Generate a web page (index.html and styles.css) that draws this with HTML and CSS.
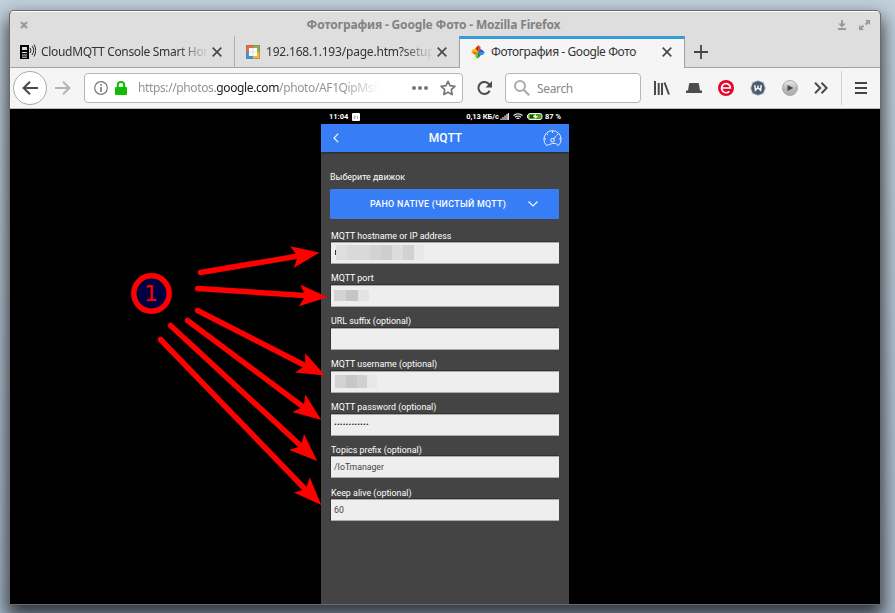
FILE: index.html
```html
<!DOCTYPE html>
<html lang="ru">
<head>
<meta charset="utf-8">
<title>Фотография - Google Фото - Mozilla Firefox</title>
<link rel="stylesheet" href="styles.css">
</head>
<body>
<div class="window">
  <header class="titlebar">
    <svg class="win-close" width="8" height="8" viewBox="0 0 8 8"><path d="M1 1l6 6M7 1L1 7" stroke="#999" stroke-width="2.3"/></svg>
    <h1 class="title">Фотография - Google Фото - Mozilla Firefox</h1>
    <div class="win-actions">
      <svg width="10" height="10" viewBox="0 0 10 10"><path d="M5 0v6M1 9h8" stroke="#999" stroke-width="2"/><path d="M1.3 3.5h7.4L5 7.5z" fill="#999"/></svg>
      <svg width="11" height="10" viewBox="0 0 11 10"><path d="M6 0h5v5L9.300 3.300 7.300 5.200 5.800 3.700 7.800 1.700zM5 10H0V5l1.700 1.700 2-1.900 1.500 1.500-2 2z" fill="#999"/></svg>
    </div>
  </header>
  <nav class="tabs">
    <div class="tab">
      <svg class="favicon" width="16" height="16" viewBox="0 0 16 16"><path d="M0 1h9v14H0z" fill="#000"/><path d="M2 3h5v3H2z" fill="#ddd"/><path d="M2 8.500h5M2 11h5M2 13.200h5" stroke="#ddd"/><path d="M10 4q2 2 0 5M12 2q3.500 4 0 9M14 .5q3.500 6 0 12" stroke="#222" fill="none"/></svg>
      <span class="tab-text t1">CloudMQTT Console Smart Hon</span>
      <svg class="x" width="10" height="10" viewBox="0 0 10 10"><path d="M.7.700l8.600 8.600M9.300.700L.7 9.300"/></svg>
    </div>
    <div class="tab">
      <svg class="favicon" width="14" height="14" viewBox="0 0 14 14"><path d="M0 0h7v7H0z" fill="#ed6b36"/><path d="M7 0h7v7H7z" fill="#8ab34b"/><path d="M0 7h7v7H0z" fill="#3898d9"/><path d="M7 7h7v7H7z" fill="#f6b82e"/><path d="M3 3h8v8H3z" fill="#fff"/><path d="M7 3v8M3 7h8" stroke="#ddd"/><path d="M.5.500h13v13H.5z" fill="none" stroke="#777" stroke-opacity=".5"/></svg>
      <span class="tab-text t2">192.168.1.193/page.htm?setup</span>
      <svg class="x" width="10" height="10" viewBox="0 0 10 10"><path d="M.7.700l8.600 8.600M9.300.700L.7 9.300"/></svg>
    </div>
    <div class="tab active">
      <svg class="favicon" width="14" height="14" viewBox="0 0 14 14"><path d="M7 7V0l2.500 2V5z" fill="#e94335"/><path d="M7 7L4 4l3-3.500z" fill="#b92d21"/><path d="M7 7h7l-2 3H9z" fill="#4285f4"/><path d="M7 7l3-3 3.500 3z" fill="#2d5fc4"/><path d="M7 7v7l-2.500-2V9z" fill="#6ac043"/><path d="M7 7l3 3-3 3.500z" fill="#248c3e"/><path d="M7 7H0l2-3h3z" fill="#fcbc05"/><path d="M7 7l-3 3L.5 7z" fill="#ed7200"/></svg>
      <span class="tab-text t3">Фотография - Google Фото</span>
      <svg class="x" width="10" height="10" viewBox="0 0 10 10"><path d="M.7.700l8.600 8.600M9.300.700L.7 9.300"/></svg>
    </div>
    <svg class="new-tab" width="14" height="14" viewBox="0 0 14 14"><path d="M7 0v14M0 7h14" stroke="#444" stroke-width="1.800"/></svg>
  </nav>
  <div class="toolbar">
    <div class="back"><svg width="16" height="14" viewBox="0 0 16 14"><path d="M16 7H1.500M8 .8L1.600 7 8 13.200" fill="none" stroke="#4a4a4a" stroke-width="2"/></svg></div>
    <svg class="forward" width="16" height="14" viewBox="0 0 16 14"><path d="M0 7h14.500M8 .8L14.400 7 8 13.200" fill="none" stroke="#b4b4b4" stroke-width="2"/></svg>
    <div class="urlbar">
      <svg width="14" height="14" viewBox="0 0 14 14"><circle cx="7" cy="7" r="6.300" fill="none" stroke="#777" stroke-width="1.200"/><path d="M7 3v1.700M7 6v5" stroke="#777" stroke-width="1.600"/></svg>
      <svg class="lock" width="12" height="14" viewBox="0 0 12 14"><path d="M2.800 7V4q0-3 3.200-3t3.200 3v3" fill="none" stroke="#12bc00" stroke-width="2"/><rect y="6" width="12" height="8" rx="1" fill="#12bc00"/></svg>
      <span class="url">https://photos.<b>google.com</b>/photo/AF1QipMs8</span>
      <svg class="dots" width="16" height="4" viewBox="0 0 16 4"><g fill="#777"><circle cx="2" cy="2" r="2"/><circle cx="8" cy="2" r="2"/><circle cx="14" cy="2" r="2"/></g></svg>
      <svg class="star" width="16" height="16" viewBox="0 0 16 16"><path d="M8 1.300l2 4.400 4.900.6-3.600 3.300.9 5L8 12.200l-4.200 2.400.9-5L1.100 6.300 6 5.700z" fill="none" stroke="#777" stroke-width="1.700" stroke-linejoin="round"/></svg>
    </div>
    <svg class="reload" width="15" height="14" viewBox="0 0 15 14"><path d="M12.400 3.600A6 6 0 1 0 12.700 9.800" fill="none" stroke="#4a4a4a" stroke-width="2"/><path d="M15 0v6.500H8.500z" fill="#4a4a4a"/></svg>
    <div class="search">
      <svg width="16" height="16" viewBox="0 0 16 16"><circle cx="6" cy="6" r="5" fill="none" stroke="#aaa" stroke-width="2"/><path d="M9.700 9.700l5.500 5.500" stroke="#aaa" stroke-width="2.200"/></svg>
      <span>Search</span>
    </div>
    <div class="tools">
      <svg width="16" height="14" viewBox="0 0 16 14"><path d="M1 0v14M4.700 2v12M8 2v12M10.500 1.500L15 13.500" stroke="#4a4a4a" stroke-width="2" fill="none"/></svg>
      <svg width="16" height="12" viewBox="0 0 16 12"><path d="M2 8.500L3 2q0-1 1.500-1h7Q13 1 13 2l1 6.500h2V11H0V8.500z" fill="#4c4c4c"/></svg>
      <svg width="16" height="16" viewBox="0 0 16 16"><circle cx="8" cy="8" r="8" fill="#e2062c"/><path d="M3.600 8h8.800A4.400 4.600 0 1 0 11.300 11.200" fill="none" stroke="#fff" stroke-width="1.700"/></svg>
      <svg width="16" height="16" viewBox="0 0 16 16"><path d="M8 0l2.500 1.500 3.400.6.600 3.400L16 8l-1.500 2.500-.6 3.400-3.400.6L8 16l-2.500-1.500-3.400-.6-.6-3.400L0 8l1.500-2.500.6-3.400 3.400-.6z" fill="#a9bac7"/><circle cx="8" cy="8" r="6.700" fill="#4a5c6e"/><path d="M4.800 5.200l.6 5L8 7.800l2.600 2.400.6-5M8 5.500v2.500" fill="none" stroke="#fff" stroke-width="1.400"/></svg>
      <svg width="16" height="16" viewBox="0 0 16 16"><defs><linearGradient id="ball" x2="0" y2="1"><stop stop-color="#eee"/><stop offset=".5" stop-color="#bbb"/><stop offset="1" stop-color="#aaa"/></linearGradient></defs><circle cx="8" cy="8" r="7.500" fill="url(#ball)" stroke="#aaa"/><path d="M5.500 5v6L11.200 8z" fill="#444"/></svg>
      <svg width="14" height="12" viewBox="0 0 14 12"><path d="M1 .7L6.200 6 1 11.300M7.500.700L12.700 6l-5.200 5.300" stroke="#4a4a4a" stroke-width="2" fill="none"/></svg>
    </div>
    <div class="menu"><svg width="12" height="12" viewBox="0 0 12 12"><path d="M0 1h12M0 6h12M0 11h12" stroke="#444" stroke-width="2"/></svg></div>
  </div>
  <main class="content">
    <section class="phone">
      <div class="status">
        <span class="clock">11:04</span>
        <svg width="8" height="8" viewBox="0 0 8 8"><rect width="8" height="8" rx="1" fill="#fff"/><path d="M2 3h1.500v1H2v1.500h1.500M5.500 3v3" stroke="#999" stroke-width=".7" fill="none"/></svg>
        <span class="net">0,13 КБ/с</span>
        <svg class="signal" width="9" height="7" viewBox="0 0 9 7"><path d="M1 7V5.500M3 7V4M5 7V2.500M7 7V1M8.500 7V0" stroke="#ddd" stroke-width="1.300"/></svg>
        <svg class="wifi" width="10" height="7" viewBox="0 0 10 7"><path d="M.5 2.500q4.500-3.500 9 0M2 4.200q3-2.300 6 0M3.600 5.600q1.400-1 2.800 0" stroke="#fff" stroke-width="1.100" fill="none"/></svg>
        <svg class="battery" width="16" height="7" viewBox="0 0 16 7"><rect x="1" y=".5" width="14" height="6" rx="2" fill="#48a71e" stroke="#eee"/><path d="M.5 2v3" stroke="#eee"/><path d="M3 2h3v3H3z" fill="#164c07"/><path d="M9 .7L6 4h2l-.5 2.500L11 3H9z" fill="#fff"/></svg>
        <span class="percent">87 %</span>
      </div>
      <div class="appbar">
        <svg width="6" height="10" viewBox="0 0 6 10"><path d="M5.300.700L1 5l4.300 4.300" fill="none" stroke="#fff" stroke-width="1.100"/></svg>
        <h2>MQTT</h2>
        <svg width="19" height="17" viewBox="0 0 19 17"><path d="M3.600 15.500A8.600 8.600 0 1 1 15.400 15.500Q13 12.500 9.500 13.500T3.600 15.500zM9.500 1v2M1 9h2M16 9h2M3.500 3.500L5 5M15.500 3.500L14 5M10.500 9l3-3.500" fill="none" stroke="#e6eeff" stroke-width="1"/><circle cx="9.500" cy="10.200" r="1.800" fill="none" stroke="#fff"/></svg>
      </div>
      <form class="form">
        <p class="choose">Выберите движок</p>
        <div class="select"><span>PAHO NATIVE (ЧИСТЫЙ MQTT)</span><svg width="10" height="6" viewBox="0 0 10 6"><path d="M.5.500L5 5 9.500.500" fill="none" stroke="#fff" stroke-width="1.100"/></svg></div>
        <div class="field"><label>MQTT hostname or IP address</label><div class="input"><i class="tick"></i><i class="mosaic m-host"></i></div></div>
        <div class="field"><label>MQTT port</label><div class="input"><i class="mosaic m-port"></i></div></div>
        <div class="field"><label>URL suffix (optional)</label><div class="input"></div></div>
        <div class="field"><label>MQTT username (optional)</label><div class="input"><i class="mosaic m-user"></i></div></div>
        <div class="field"><label>MQTT password (optional)</label><div class="input"><span class="password">••••••••••••</span></div></div>
        <div class="field"><label>Topics prefix (optional)</label><div class="input"><span>/IoTmanager</span></div></div>
        <div class="field"><label>Keep alive (optional)</label><div class="input"><span>60</span></div></div>
      </form>
    </section>
  </main>
</div>
<svg class="annotations" width="895" height="613" viewBox="0 0 895 613">
  <defs><marker id="head" markerUnits="userSpaceOnUse" markerWidth="30" markerHeight="24" refX="28" refY="12" orient="auto"><path d="M28 12L0 1l6 11L0 23z" fill="#f00"/></marker></defs>
  <circle cx="151.500" cy="293.500" r="17.700" fill="#000040" stroke="#f00" stroke-width="5.400"/>
  <text x="151" y="301" text-anchor="middle">1</text>
  <g class="shafts"><path d="M200.500 272.500L297 256.200"/><path d="M197.500 288.500L305 295.500"/><path d="M197.500 310.500L304 365"/><path d="M187.500 320.500L302 406"/><path d="M170.500 325.500L300 445"/><path d="M160.500 339.500L304 488"/></g>
  <g class="heads"><path d="M200.500 272.500L319.500 252.500"/><path d="M197.500 288.500L327.500 297.300"/><path d="M197.500 310.500L325 375.500"/><path d="M187.500 320.500L321.300 420"/><path d="M170.500 325.500L317.200 461"/><path d="M160.500 339.500L321.300 505"/></g>
</svg>
</body>
</html>
```

FILE: styles.css
```css
* { box-sizing: border-box; }
body {
  margin: 0;
  width: 895px;
  height: 613px;
  overflow: hidden;
  padding: 10px 14px 8px 9px;
  background: linear-gradient(#c2d0dc, #a7b6c7);
  font-family: "Noto Sans", sans-serif;
}
svg { display: block; flex: none; }
.window {
  width: 872px;
  height: 595px;
  border: 1px solid #6b6b6b;
  border-radius: 5px 5px 0 0;
  overflow: hidden;
  background: #000;
  box-shadow: 0 9px 18px 2px rgba(0, 0, 0, .72);
}
.titlebar {
  height: 25px;
  display: flex;
  align-items: center;
  padding: 2px 10px 0;
  background: #dedede;
  border-top: 1px solid #fff;
}
.title {
  flex: 1;
  margin: 0;
  padding-left: 2px;
  text-align: center;
  font-size: 12px;
  line-height: 20px;
  font-weight: 700;
  letter-spacing: -.17px;
  color: #828282;
  white-space: nowrap;
}
.win-actions { display: flex; gap: 12px; }
.tabs { display: flex; height: 32px; background: #dedede; border-bottom: 1px solid #a2a2a2; }
.tab {
  width: 225px;
  display: flex;
  align-items: center;
  padding: 0 12px 0 10px;
  border-right: 1px solid #b0b0b0;
}
.tab:nth-child(2) { border-right: 0; width: 224px; padding-right: 11px; }
.tab.active {
  width: 226px;
  height: 32px;
  background: #f5f5f5;
  border: 1px solid #a0a0a0;
  border-top: 3px solid #3a99d8;
  border-bottom: 0;
  padding-bottom: 3px;
}
.favicon { width: 16px; }
.tab-text {
  width: 166px;
  margin: 0 5px;
  overflow: hidden;
  white-space: nowrap;
  font-size: 12px;
  line-height: 20px;
  color: #333;
}
.t1 { letter-spacing: -.32px; }
.t2 { letter-spacing: -.2px; }
.t3 { letter-spacing: -.42px; }
.t1, .t2 { -webkit-mask: linear-gradient(90deg, #000 136px, transparent 168px); mask: linear-gradient(90deg, #000 136px, transparent 168px); }
.x { fill: none; stroke: #4a4a4a; stroke-width: 1.700; }
.new-tab { margin: 9px 0 0 9px; }
.toolbar { height: 41px; display: flex; align-items: center; background: #f5f5f5; border-bottom: 1px solid #bbb; }
.back {
  width: 34px;
  height: 34px;
  margin-left: 3px;
  display: flex;
  align-items: center;
  justify-content: center;
  border: 1px solid #aaa;
  border-radius: 50%;
  background: #fff;
}
.forward { margin-left: 8px; }
.urlbar, .search { height: 30px; display: flex; align-items: center; background: #fff; border: 1px solid #b6b6b6; border-radius: 4px; }
.urlbar { width: 379px; margin-left: 13px; padding: 0 6px 0 9px; }
.lock { margin: 0 11px 0 7px; }
.url {
  width: 243px;
  overflow: hidden;
  white-space: nowrap;
  font-size: 12px;
  line-height: 20px;
  letter-spacing: -.38px;
  color: #949494;
  -webkit-mask: linear-gradient(90deg, #000 205px, transparent 241px);
  mask: linear-gradient(90deg, #000 205px, transparent 241px);
}
.url b { font-weight: 400; color: #222; }
.dots { margin-left: auto; }
.star { margin-left: 12px; }
.reload { margin-left: 14px; }
.search { width: 136px; margin-left: 13px; padding-left: 8px; gap: 7px; font-size: 12px; letter-spacing: -.35px; color: #888; }
.tools { display: flex; align-items: center; gap: 16px; margin-left: 13px; }
.menu { margin-left: 13px; height: 34px; padding-left: 13px; display: flex; align-items: center; border-left: 1px solid #d0d0d0; }
.content { height: 496px; padding-left: 311px; background: #000; }
.phone { width: 248px; height: 496px; background: #444; font-family: Roboto, sans-serif; color: #fff; }
.status { height: 15px; display: flex; align-items: center; padding: 0 8px; background: #000; font-size: 7.500px; font-weight: 700; white-space: nowrap; }
.clock { margin-right: 4px; }
.net { margin-left: auto; }
.signal { margin-left: 1px; }
.wifi { margin-left: 4px; }
.battery { margin: 0 2px 0 4px; }
.appbar { height: 28px; display: flex; align-items: center; justify-content: space-between; padding: 0 7px 0 12px; background: #377df5; box-shadow: 0 1px 2px rgba(0, 0, 0, .45); }
.appbar h2 { margin: 0 0 0 9px; font-size: 12px; font-weight: 500; }
.form { padding: 18px 10px 0 9px; }
.choose { margin: 0; padding-top: 1px; font-size: 8.900px; line-height: 12px; height: 19px; }
.select { height: 30px; display: flex; align-items: center; border-radius: 1px; background: #377df5; padding-left: 40px; font-size: 8.900px; font-weight: 500; letter-spacing: .31px; white-space: nowrap; }
.select span { width: 158px; }
.field { height: 42.900px; padding: 10.500px 0 0 1px; }
.field label { display: block; height: 12.500px; font-size: 8.900px; line-height: 12px; white-space: nowrap; }
.input { height: 22px; border: solid #aaa; border-width: 1px 0; background: #eee; box-shadow: -1px -1px 0 #333; padding: 0 3px 1px; display: flex; align-items: center; font-size: 8.700px; color: #444; }
.password { font-size: 8px; color: #222; letter-spacing: .2px; }
.mosaic { display: block; }
.tick { width: 1px; height: 5px; margin-left: 1px; background: #333; }
.m-host { width: 88px; height: 15px; background: linear-gradient(90deg, #dedede 11px, #d9d9d9 11px 34px, #d3d3d3 34px 45px, #cecece 45px 56px, #dcdcdc 56px 67px, #d2d2d2 67px 78px, #e8e8e8 78px); }
.m-port { width: 35px; height: 11px; background: linear-gradient(90deg, #d3d3d3 12px, #c5c5c5 12px 24px, #e3e3e3 24px); }
.m-user { width: 42px; height: 13px; margin-left: 1px; background: linear-gradient(90deg, #d2d2d2 11px, #c7c7c7 11px 22px, #d0d0d0 22px 32px, #e7e7e7 32px); }
.annotations { position: absolute; left: 0; top: 0; pointer-events: none; }
.annotations text { font: 22px "DejaVu Sans", sans-serif; fill: #f00; }
.shafts { fill: none; stroke: #f00; stroke-width: 5.500; stroke-linecap: round; }
.heads path { fill: none; stroke: none; marker-end: url(#head); }
```
